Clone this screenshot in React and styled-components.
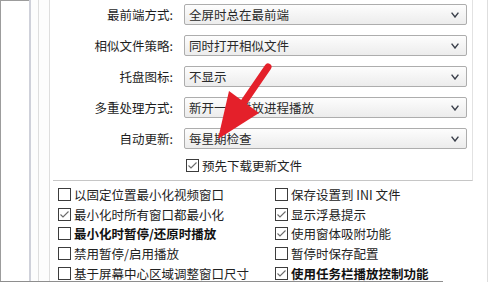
import styled, { createGlobalStyle } from "styled-components";

const GlobalStyle = createGlobalStyle`
  html, body {
    margin: 0;
    padding: 0;
    background: #ffffff;
  }
  body {
    font-family: "Noto Sans CJK SC", "Liberation Sans", sans-serif;
    color: #1e1e1e;
  }
`;

const selects = [
  { label: "最前端方式:", value: "全屏时总在最前端" },
  { label: "相似文件策略:", value: "同时打开相似文件" },
  { label: "托盘图标:", value: "不显示" },
  { label: "多重处理方式:", value: "新开一个播放进程播放" },
  { label: "自动更新:", value: "每星期检查" },
];

const options = [
  { text: "以固定位置最小化视频窗口", checked: false },
  { text: "保存设置到 INI 文件", checked: false },
  { text: "最小化时所有窗口都最小化", checked: true },
  { text: "显示浮悬提示", checked: true },
  { text: "最小化时暂停/还原时播放", checked: false, bold: true },
  { text: "使用窗体吸附功能", checked: true },
  { text: "禁用暂停/启用播放", checked: false },
  { text: "暂停时保存配置", checked: false },
  { text: "基于屏幕中心区域调整窗口尺寸", checked: false },
  { text: "使用任务栏播放控制功能", checked: true, bold: true },
];

const Check = ({ checked }) => (
  <Box>
    {checked && (
      <svg width="11" height="11" viewBox="0 0 11 11">
        <polyline
          points="1.5,5.5 4,8 9.5,2.5"
          fill="none"
          stroke="#6a6a6a"
          strokeWidth="1.1"
        />
      </svg>
    )}
  </Box>
);

const Chevron = () => (
  <svg width="8" height="6" viewBox="0 0 8 6">
    <polyline
      points="0.6,0.6 4,5 7.4,0.6"
      fill="none"
      stroke="#3a3f4a"
      strokeWidth="1.4"
    />
  </svg>
);

const App = () => {
  return (
    <>
      <GlobalStyle />
      <Window>
        <Gutter />
        <Rail>
          <Inner>
            <Panel>
              <Group>
                <Form>
                  {selects.map((s) => (
                    <FormRow key={s.label}>
                      <Label>{s.label}</Label>
                      <Select>
                        <span>{s.value}</span>
                        <Chevron />
                      </Select>
                    </FormRow>
                  ))}
                  <FormRow $tall>
                    <span />
                    <CheckItem $indent={2}>
                      <Check checked />
                      <span>预先下载更新文件</span>
                    </CheckItem>
                  </FormRow>
                </Form>
              </Group>
              <OptionGrid>
                {options.map((o) => (
                  <CheckItem key={o.text} $bold={o.bold}>
                    <Check checked={o.checked} />
                    <span>{o.text}</span>
                  </CheckItem>
                ))}
              </OptionGrid>
            </Panel>
          </Inner>
        </Rail>
        <Pointer width="500" height="282" viewBox="0 0 500 282">
          <line
            x1="268"
            y1="67"
            x2="244"
            y2="102"
            stroke="#e4202a"
            strokeWidth="7"
            strokeLinecap="round"
          />
          <polygon points="229,91 259,113 218,139" fill="#e4202a" />
        </Pointer>
      </Window>
    </>
  );
};

const Window = styled.div`
  position: relative;
  display: flex;
  width: 500px;
  height: 282px;
  overflow: hidden;
  background: #ffffff;

  &::after {
    content: "";
    position: absolute;
    left: 0;
    bottom: 0;
    width: 443px;
    height: 1px;
    background: #8e8e8e;
  }
`;

const Gutter = styled.div`
  flex: none;
  width: 29px;
  box-sizing: border-box;
  border-left: 1px solid #9c9c9c;
  border-top: 1px solid #9c9c9c;
`;

const Rail = styled.div`
  flex: none;
  display: flex;
  border-left: 2px solid #cfd1da;
  padding-left: 7px;
  background: #fdfdfd;
`;

const Inner = styled.div`
  display: flex;
  border-left: 1px solid #dedede;
  padding-left: 10px;
`;

const Panel = styled.div`
  width: 437px;
  border-left: 1px solid #dedede;
  border-right: 1px solid #dedede;
  background: #ffffff;
  font-size: 12.5px;
`;

const Group = styled.div`
  margin-left: 3px;
  width: 419px;
  height: 180px;
  border-right: 1px solid #e2e2e2;
  border-bottom: 1px solid #c6c6c6;
`;

const Form = styled.div`
  display: flex;
  flex-direction: column;
  gap: 10px;
  padding-top: 4px;
`;

const FormRow = styled.div`
  display: grid;
  grid-template-columns: 123px 283px;
  column-gap: 8px;
  align-items: center;
  height: 21px;
  margin-top: ${(p) => (p.$tall ? "-4px" : "0")};
`;

const Label = styled.div`
  text-align: right;
  line-height: 21px;
  padding-right: 3px;
  white-space: nowrap;
  color: #1e1e1e;
`;

const Select = styled.div`
  box-sizing: border-box;
  height: 21px;
  display: flex;
  align-items: center;
  justify-content: space-between;
  padding: 0 7px 0 4px;
  border: 1px solid #adadad;
  border-radius: 2px;
  background: linear-gradient(#fdfdfd, #ececec);
  color: #2a2a2a;
  white-space: nowrap;
`;

const OptionGrid = styled.div`
  display: grid;
  grid-template-columns: 217px 200px;
  grid-auto-rows: 19.6px;
  padding: 4px 0 0 8px;
`;

const CheckItem = styled.div`
  display: flex;
  align-items: center;
  gap: 3px;
  padding-left: ${(p) => p.$indent || 0}px;
  white-space: nowrap;
  font-weight: ${(p) => (p.$bold ? 700 : 400)};
  color: ${(p) => (p.$bold ? "#111" : "#222")};
`;

const Box = styled.span`
  flex: none;
  box-sizing: border-box;
  width: 13px;
  height: 13px;
  border: 1px solid #3c3c3c;
  background: #ffffff;
  display: flex;
  align-items: center;
  justify-content: center;
`;

const Pointer = styled.svg`
  position: absolute;
  left: 0;
  top: 0;
  pointer-events: none;
`;

export default App;
